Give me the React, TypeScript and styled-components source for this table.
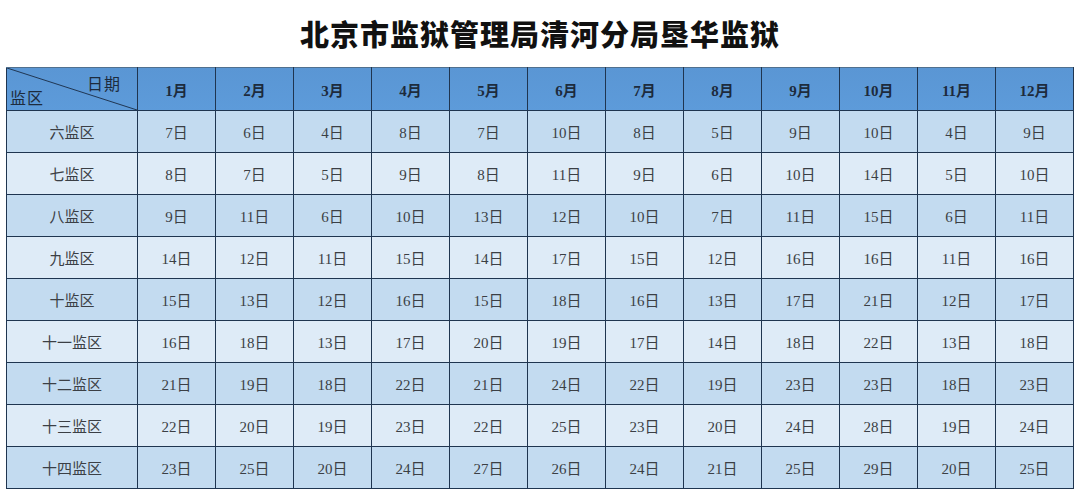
import React from "react";
import styled, { createGlobalStyle } from "styled-components";

const GlobalStyle = createGlobalStyle`
  body {
    margin: 0;
    background: #ffffff;
    font-family: "Liberation Serif", "Noto Sans CJK SC", serif;
  }
`;

const Page = styled.div`
  width: 1080px;
  height: 496px;
  padding: 0 6px;
  box-sizing: border-box;
`;

const Title = styled.h1`
  margin: 0;
  height: 67px;
  display: flex;
  align-items: center;
  justify-content: center;
  font-family: "Noto Sans CJK SC", sans-serif;
  font-size: 29px;
  font-weight: 900;
  color: #111;
  letter-spacing: 1px;
  padding-bottom: 2px;
  box-sizing: border-box;
`;

const Table = styled.table`
  border-collapse: collapse;
  table-layout: fixed;
  width: 1068px;
  border: 1px solid #1f3550;
`;

const HeadRow = styled.tr`
  height: 43px;
  background: linear-gradient(#5a96d4, #5d9bda);
`;

const Row = styled.tr<{ $shade: boolean }>`
  height: 42px;
  background: ${(p) => (p.$shade ? "#c3dbf0" : "#deebf7")};
`;

const Cell = styled.td`
  border: 1px solid #1f3550;
  text-align: center;
  vertical-align: middle;
  padding: 0;
  font-size: 15px;
  color: #3b3f45;
`;

const HeadCell = styled.th`
  border: 1px solid #1f3550;
  border-top-color: #50708f;
  text-align: center;
  vertical-align: middle;
  padding: 0;
  font-size: 15px;
  font-weight: 700;
  color: #1d2b3d;
`;

const CornerCell = styled.th`
  position: relative;
  border: 1px solid #1f3550;
  border-top-color: #50708f;
  padding: 0;
  font-weight: 400;
  font-size: 16px;
  color: #1d2b3d;
`;

const Diagonal = styled.svg`
  position: absolute;
  inset: 0;
  width: 100%;
  height: 100%;
`;

const CornerTop = styled.span`
  position: absolute;
  right: 16px;
  top: 3px;
  letter-spacing: 1px;
`;

const CornerBottom = styled.span`
  position: absolute;
  left: 3px;
  bottom: 1px;
  letter-spacing: 1px;
`;

const months = ["1月", "2月", "3月", "4月", "5月", "6月", "7月", "8月", "9月", "10月", "11月", "12月"];

const rows: [string, number[]][] = [
  ["六监区", [7, 6, 4, 8, 7, 10, 8, 5, 9, 10, 4, 9]],
  ["七监区", [8, 7, 5, 9, 8, 11, 9, 6, 10, 14, 5, 10]],
  ["八监区", [9, 11, 6, 10, 13, 12, 10, 7, 11, 15, 6, 11]],
  ["九监区", [14, 12, 11, 15, 14, 17, 15, 12, 16, 16, 11, 16]],
  ["十监区", [15, 13, 12, 16, 15, 18, 16, 13, 17, 21, 12, 17]],
  ["十一监区", [16, 18, 13, 17, 20, 19, 17, 14, 18, 22, 13, 18]],
  ["十二监区", [21, 19, 18, 22, 21, 24, 22, 19, 23, 23, 18, 23]],
  ["十三监区", [22, 20, 19, 23, 22, 25, 23, 20, 24, 28, 19, 24]],
  ["十四监区", [23, 25, 20, 24, 27, 26, 24, 21, 25, 29, 20, 25]],
];

export default function App() {
  return (
    <Page>
      <GlobalStyle />
      <Title>北京市监狱管理局清河分局垦华监狱</Title>
      <Table>
        <colgroup>
          <col style={{ width: 131 }} />
          {months.map((m) => (
            <col key={m} style={{ width: 78 }} />
          ))}
        </colgroup>
        <thead>
          <HeadRow>
            <CornerCell>
              <Diagonal viewBox="0 0 131 43" preserveAspectRatio="none">
                <line x1="0" y1="0" x2="131" y2="43" stroke="#1f3550" strokeWidth="1" />
              </Diagonal>
              <CornerTop>日期</CornerTop>
              <CornerBottom>监区</CornerBottom>
            </CornerCell>
            {months.map((m) => (
              <HeadCell key={m}>{m}</HeadCell>
            ))}
          </HeadRow>
        </thead>
        <tbody>
          {rows.map(([name, days], i) => (
            <Row key={name} $shade={i % 2 === 0}>
              <Cell>{name}</Cell>
              {days.map((d, j) => (
                <Cell key={j}>{d}日</Cell>
              ))}
            </Row>
          ))}
        </tbody>
      </Table>
    </Page>
  );
}
